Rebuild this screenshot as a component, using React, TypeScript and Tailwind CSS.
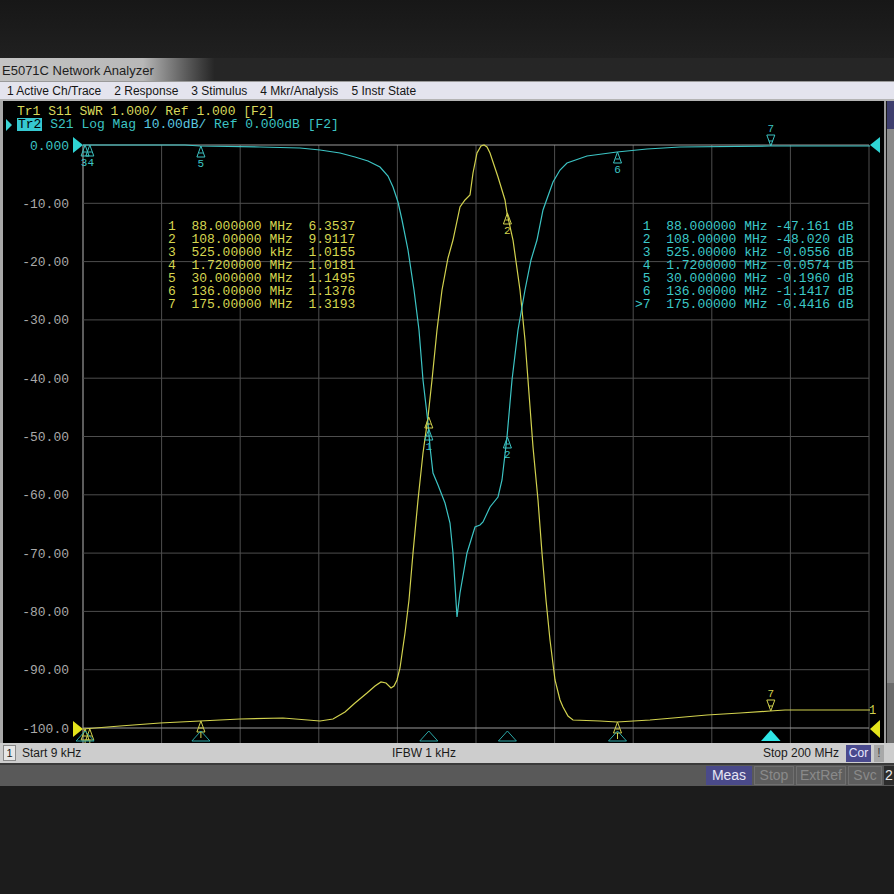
import React from 'react';

const mono = { fontFamily: '"Liberation Mono", "DejaVu Sans Mono", monospace' };
const sans = { fontFamily: '"Liberation Sans", Arial, sans-serif' };

const YELLOW = '#d2d24e';
const CYAN = '#3cc4c4';
const GRID = '#4e4e4e';

const X0 = 83;
const DX = 78.6;
const Y0 = 145;
const DY = 58.3;

const yLabels = ['0.000', '-10.00', '-20.00', '-30.00', '-40.00', '-50.00', '-60.00', '-70.00', '-80.00', '-90.00', '-100.0'];

const s21 =
  'M83,145 L185,145 L200,146 L260,147 L300,148 L320,150 L340,153 L355,157 L368,161 L380,167 L388,176 L393,187 L398,202 L402,220 L408,250 L414,290 L419,330 L423,380 L428,423 L430,447 L433,473 L438,485 L445,503 L450,523 L453,553 L457,617 L460,593 L467,553 L475,527 L480,525 L483,522 L490,507 L498,497 L502,480 L507,437 L512,380 L518,330 L525,290 L531,260 L537,240 L543,210 L553,182 L560,170 L567,163 L587,156 L617,152 L647,149 L680,147 L770,146 L870,146';

const s11 =
  'M83,729 L120,726 L160,723 L200,721 L240,719 L283,718 L320,721 L333,719 L345,712 L355,703 L367,693 L375,686 L381,682 L386,683 L391,688 L394,686 L397,680 L400,668 L405,633 L409,600 L413,553 L418,500 L423,453 L428,417 L432,380 L437,330 L442,290 L448,258 L453,240 L460,207 L465,200 L470,195 L473,173 L477,153 L481,146 L484,145 L487,147 L490,153 L498,177 L505,200 L507,213 L513,240 L520,290 L525,340 L528,380 L533,447 L538,500 L542,553 L546,600 L550,640 L555,680 L560,700 L563,707 L568,716 L573,720 L600,721 L617,722 L650,720 L673,718 L707,715 L740,713 L770,711 L785,710 L870,710';

// label: text under/over the triangle ('' = hidden behind another marker's label or clipped)
type Mk = { n: string; x: number; y: number; down?: boolean; label?: string; lx?: number };

const cyanMarkers: Mk[] = [
  { n: '1', x: 428.8, y: 429 },
  { n: '2', x: 507.4, y: 437 },
  { n: '3', x: 85.1, y: 145, label: '34', lx: 87.4 },
  { n: '4', x: 89.8, y: 145, label: '' },
  { n: '5', x: 200.9, y: 146 },
  { n: '6', x: 617.5, y: 152 },
  { n: '7', x: 770.8, y: 146, down: true },
];

const yellowMarkers: Mk[] = [
  { n: '1', x: 428.8, y: 417, label: '' },
  { n: '2', x: 507.4, y: 213 },
  { n: '3', x: 85.1, y: 729, label: '' },
  { n: '4', x: 89.8, y: 729, label: '' },
  { n: '5', x: 200.9, y: 721, label: '' },
  { n: '6', x: 617.5, y: 722, label: '' },
  { n: '7', x: 770.8, y: 711, down: true },
];

const stimulus = [85.1, 200.9, 428.8, 507.4, 617.5];

const yellowRows = [
  '1  88.000000 MHz  6.3537',
  '2  108.00000 MHz  9.9117',
  '3  525.00000 kHz  1.0155',
  '4  1.7200000 MHz  1.0181',
  '5  30.000000 MHz  1.1495',
  '6  136.00000 MHz  1.1376',
  '7  175.00000 MHz  1.3193',
];

const cyanRows = [
  ' 1  88.000000 MHz -47.161 dB',
  ' 2  108.00000 MHz -48.020 dB',
  ' 3  525.00000 kHz -0.0556 dB',
  ' 4  1.7200000 MHz -0.0574 dB',
  ' 5  30.000000 MHz -0.1960 dB',
  ' 6  136.00000 MHz -1.1417 dB',
  '>7  175.00000 MHz -0.4416 dB',
];

function Marker({ m, color }: { m: Mk; color: string }) {
  const label = m.label ?? m.n;
  const lx = m.lx ?? m.x;
  if (m.down) {
    return (
      <g stroke={color} fill="none" strokeWidth={1}>
        <path d={`M${m.x},${m.y} L${m.x - 4},${m.y - 11} L${m.x + 4},${m.y - 11} Z`} />
        <line x1={m.x - 2} y1={m.y - 5} x2={m.x + 2} y2={m.y - 5} />
        {label && (
          <text x={lx} y={m.y - 14} fill={color} stroke="none" fontSize={11} textAnchor="middle" style={mono}>
            {label}
          </text>
        )}
      </g>
    );
  }
  return (
    <g stroke={color} fill="none" strokeWidth={1}>
      <path d={`M${m.x},${m.y} L${m.x - 4},${m.y + 11} L${m.x + 4},${m.y + 11} Z`} />
      <line x1={m.x - 2} y1={m.y + 7} x2={m.x + 2} y2={m.y + 7} />
      {m.y > 700 && <line x1={m.x} y1={m.y + 11} x2={m.x} y2={m.y + 17} />}
      {label && (
        <text x={lx} y={m.y + 21} fill={color} stroke="none" fontSize={11} textAnchor="middle" style={mono}>
          {label}
        </text>
      )}
    </g>
  );
}

function Plot() {
  return (
    <svg className="absolute inset-0 h-full w-full" viewBox="3 101 881 642" preserveAspectRatio="none">
      {/* grid */}
      {Array.from({ length: 11 }, (_, i) => (
        <line key={'v' + i} x1={X0 + i * DX} y1={Y0} x2={X0 + i * DX} y2={743} stroke={i === 0 ? '#b8b8b8' : GRID} strokeWidth={1} />
      ))}
      {Array.from({ length: 11 }, (_, j) => (
        <line key={'h' + j} x1={X0} y1={Y0 + j * DY} x2={X0 + 10 * DX} y2={Y0 + j * DY} stroke={j === 10 || j === 0 ? '#9a9a9a' : GRID} strokeWidth={1} />
      ))}
      {yLabels.map((l, j) => (
        <text key={l} x={69} y={Y0 + j * DY + 4.5} fontSize={13} textAnchor="end" fill={j === 0 ? CYAN : '#a9a9a9'} style={mono}>
          {l}
        </text>
      ))}

      {/* traces */}
      <path d={s11} fill="none" stroke={YELLOW} strokeWidth={1.2} />
      <path d={s21} fill="none" stroke={CYAN} strokeWidth={1.2} />

      {yellowMarkers.map((m) => (
        <Marker key={'y' + m.n} m={m} color={YELLOW} />
      ))}
      {cyanMarkers.map((m) => (
        <Marker key={'c' + m.n} m={m} color={CYAN} />
      ))}

      {/* stimulus markers */}
      {stimulus.map((x) => (
        <path key={x} d={`M${x},731 L${x - 9},741 L${x + 9},741 Z`} fill="none" stroke="#2aa6a6" strokeWidth={1} />
      ))}
      <path d="M770.8,730 L761,741 L780.6,741 Z" fill="#2ee6e6" />

      {/* reference arrows */}
      <path d="M73,137 L83,145 L73,153 Z" fill="#2fd4d4" />
      <path d="M73,721 L83,729 L73,737 Z" fill="#e4e41c" />
      <path d="M880,137 L870,145 L880,153 Z" fill="#2fd4d4" />
      <path d="M880,720 L870,729 L880,738 Z" fill="#e4e41c" />
      <text x={869} y={714} fontSize={12} fill={YELLOW} style={mono}>
        1
      </text>
    </svg>
  );
}

function TraceHeader() {
  return (
    <div className="relative z-10 flex flex-col pl-[2px] pt-[4px] text-[13px] leading-[13px]" style={mono}>
      <div className="flex items-center">
        <span className="w-[9px]" />
        <span className="whitespace-pre pl-[3px] text-[#d8d85c]">Tr1 S11 SWR 1.000/ Ref 1.000 [F2]</span>
      </div>
      <div className="flex items-center">
        <span className="ml-[1px] h-0 w-0 border-y-[6px] border-l-[6px] border-y-transparent border-l-[#3cd4d4]" />
        <span className="ml-[5px] bg-[#36c8d0] px-[1px] text-black">Tr2</span>
        <span className="whitespace-pre text-[#3cc4c4]">
          {' S21 Log Mag '}
          <span className="text-[#5cc8e0]">10.00dB/</span>
          {' Ref 0.000dB [F2]'}
        </span>
      </div>
    </div>
  );
}

export default function App() {
  return (
    <div className="flex h-[894px] w-[894px] flex-col overflow-hidden bg-[#1b1b1b]" style={sans}>
      <div className="h-[58px] bg-gradient-to-b from-[#171717] to-[#202020]" />

      {/* window title */}
      <div className="flex h-[23px] items-center bg-gradient-to-r from-[#c4c4c4] via-[#b8b8b8] via-[16%] to-[#262626] to-[24%]">
        <span className="pl-[2px] pt-[2px] text-[13px] text-[#1e1e1e]">E5071C Network Analyzer</span>
      </div>

      {/* menu */}
      <div className="flex h-[20px] items-center gap-[13px] border-t border-[#9a9a9a] border-b-2 border-b-[#b4b4b4] bg-[#e4e4ee] pl-[7px] text-[12px] text-[#151515]">
        <span>1 Active Ch/Trace</span>
        <span>2 Response</span>
        <span>3 Stimulus</span>
        <span>4 Mkr/Analysis</span>
        <span>5 Instr State</span>
      </div>

      {/* chart area */}
      <div className="flex h-[642px]">
        <div className="w-[3px] bg-[#a8a8a8]" />
        <div className="relative flex-1 bg-black">
          <Plot />
          <TraceHeader />
          <div className="absolute left-[165px] top-[119px] text-[13px] leading-[13px] text-[#d6d650]" style={mono}>
            {yellowRows.map((r) => (
              <div key={r} className="whitespace-pre">
                {r}
              </div>
            ))}
          </div>
          <div className="absolute left-[632px] top-[119px] text-[13px] leading-[13px] text-[#3cc8c8]" style={mono}>
            {cyanRows.map((r) => (
              <div key={r} className="whitespace-pre">
                {r}
              </div>
            ))}
          </div>
        </div>
        <div className="flex w-[10px] border-l-2 border-[#9c9c9c] bg-[#1a1a1a]">
          <div className="ml-[1px] flex flex-1 flex-col">
            <div className="h-[28px] bg-[#3e3e6e]" />
            <div className="flex-1 bg-[#8a8a8a]" />
            <div className="h-[60px] bg-[#6c6c6c]" />
          </div>
        </div>
      </div>

      {/* status bar */}
      <div className="flex h-[20px] items-center bg-[#cdcdcd] pl-[3px] pr-[10px] text-[12px] text-[#1a1a1a]">
        <span className="flex h-[16px] w-[13px] items-center justify-center border border-[#8a8a8a] bg-[#e6e6e6] text-[11px]">1</span>
        <span className="ml-[6px] w-[370px]">Start 9 kHz</span>
        <span className="w-[371px]">IFBW 1 kHz</span>
        <span className="w-[83px]">Stop 200 MHz</span>
        <span className="flex h-[17px] w-[25px] items-center justify-center bg-[#4a4a8e] text-[#e8e8ff]">Cor</span>
        <span className="ml-[3px] flex h-[17px] w-[10px] items-center justify-center bg-[#a8a8a8] text-[#444]">!</span>
      </div>

      {/* softkey bar */}
      <div className="flex h-[23px] items-stretch justify-end border-t-2 border-[#3a3a3a] bg-[#595959] py-[1px] text-[14px]">
        <span className="flex w-[46px] items-center justify-center bg-[#4a4a8a] text-[#e6e6f4]">Meas</span>
        <span className="ml-[2px] flex w-[40px] items-center justify-center border border-[#707070] bg-[#5e5e5e] text-[#8a8a8a]">Stop</span>
        <span className="ml-[2px] flex w-[50px] items-center justify-center border border-[#707070] bg-[#5e5e5e] text-[#8a8a8a]">ExtRef</span>
        <span className="ml-[2px] flex w-[34px] items-center justify-center border border-[#707070] bg-[#5e5e5e] text-[#8a8a8a]">Svc</span>
        <span className="ml-[2px] flex w-[10px] items-center overflow-hidden bg-[#2c2c2c] pl-[1px] text-[#e8e8e8]">2</span>
      </div>

      <div className="flex-1 bg-[#1c1c1c]" />
    </div>
  );
}
